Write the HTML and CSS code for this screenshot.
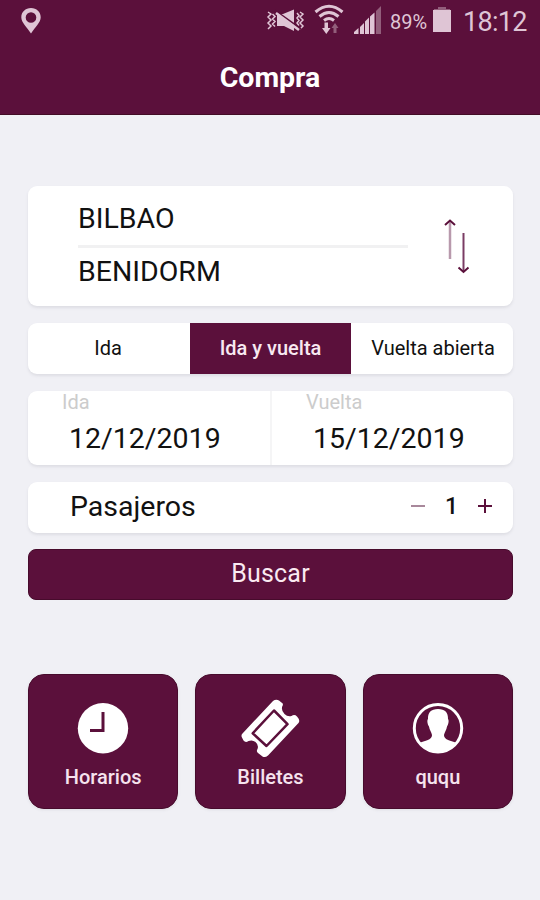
FILE: index.html
```html
<!DOCTYPE html>
<html lang="es">
<head>
<meta charset="utf-8">
<title>Compra</title>
<link rel="stylesheet" href="styles.css">
</head>
<body>
<header class="header">
  <div class="status">
    <svg class="pin" width="22" height="28" viewBox="0 0 22 28"><path fill-rule="evenodd" d="M11 1C5.400 1 1.300 5 1.300 10.200C1.300 15.600 7 20 11 26.500C15 20 20.700 15.600 20.700 10.200C20.700 5 16.600 1 11 1ZM11 5.200A5.300 5.300 0 1 1 11 15.800A5.300 5.300 0 1 1 11 5.200Z"/></svg>
    <svg class="signals" width="120" height="34" viewBox="0 0 120 34">
      <g class="line">
        <path d="M2 12L5 14L2 17L5 20L2 23L5 26L2 29M6.500 14L9 16.500L6.500 19L9 21.500L6.500 24L9 26.500M34 12L37 14L34 17L37 20L34 23L37 26L34 29M31 13L33 15.500L31 18L33 20.500L31 23L33 25.500"/>
      </g>
      <path d="M11 14H17L28 9.500V31L18 26H11Z"/>
      <path class="cut" d="M9 10.500L35 29"/>
      <path class="slash" d="M10 13L33 30"/>
      <g class="waves"><path d="M49.500 12Q63 .5 76.500 12M53.500 16.500Q63 8.500 72.500 16.500M58 20.500Q63 16.500 68 20.500"/></g>
      <path d="M58.500 22.500H62V28H64.500L60.300 34L56 28H58.500Z"/>
      <path class="dim" d="M67.500 33V28H65.500L69 23L72.500 28H70.500V33Z"/>
      <path d="M88 34V32L92.500 28V34ZM94 34V27L98 23V34ZM99 34V21.500L103 17.500V34ZM104 34V16.500L108.500 12.500V34Z"/>
      <path class="dim" d="M110 34V11L115 6V34Z"/>
    </svg>
    <span class="percent">89%</span>
    <svg class="battery" width="18" height="28" viewBox="0 0 18 28"><path class="dim" d="M5 2H13V4H17V6H1V4H5Z"/><path d="M0 5H18V27H0Z"/></svg>
    <span class="time">18:12</span>
  </div>
  <h1 class="title">Compra</h1>
</header>
<main class="main">
  <section class="card route">
    <div class="cities">
      <div class="city">BILBAO</div>
      <div class="city last">BENIDORM</div>
    </div>
    <svg class="swap" width="26" height="56" viewBox="0 0 26 56"><path class="up" d="M6 41V3"/><path class="down" d="M19.500 15V53"/><path class="heads" d="M1 7L6 2.500L11 7M14.500 49.500L19.500 54L24.500 49.500"/></svg>
  </section>
  <section class="card tabs">
    <div class="tab">Ida</div>
    <div class="tab active">Ida y vuelta</div>
    <div class="tab open">Vuelta abierta</div>
  </section>
  <section class="card dates">
    <div class="date"><span class="label">Ida</span><span class="value">12/12/2019</span></div>
    <div class="date"><span class="label">Vuelta</span><span class="value">15/12/2019</span></div>
  </section>
  <section class="card passengers">
    <span class="name">Pasajeros</span>
    <svg class="minus" width="14" height="14" viewBox="0 0 14 14"><path d="M0 7H14"/></svg>
    <span class="count">1</span>
    <svg class="plus" width="14" height="14" viewBox="0 0 14 14"><path d="M0 7H14M7 0V14"/></svg>
  </section>
  <div class="search">Buscar</div>
  <nav class="tiles">
    <div class="tile">
      <svg width="60" height="60" viewBox="0 0 60 60"><circle cx="30" cy="30.300" r="25.200"/><path class="hands" d="M30 14V32.500H17"/></svg>
      <span class="horarios">Horarios</span>
    </div>
    <div class="tile">
      <svg width="60" height="60" viewBox="0 0 60 60"><path d="M33 3Q36 .8 39 2.500L42.700 5.500Q43.300 7 42.200 8.500Q41 12.500 44.500 16Q47.500 19 51.500 18Q54.500 16 57 18.500L58.500 20.500Q60 23 58.500 25L28 57.500Q25 60 22.500 58.500L18 55Q16 53.500 17.500 51Q19 47 15.500 44Q12.500 41.500 8.500 43Q5.500 45 3.500 42.500L1.700 39Q1 37 2.500 35.500Z"/><path class="inner" d="M34 12.500L47.500 26.200L26.500 48L12.700 35.300Z"/></svg>
      <span class="billetes">Billetes</span>
    </div>
    <div class="tile">
      <svg width="60" height="60" viewBox="0 0 60 60"><circle class="ring" cx="30" cy="30.300" r="23.700"/><path d="M30 11C23 11 19.700 14.500 20 21C18.900 22 19.300 26 21 28.500C21.500 32 23.500 34 24 37C24 40.500 21 42 12.500 44.500C17 51.500 23 54.500 30 54.500C37 54.500 43 51.500 47.500 44.500C39 42 36 40.500 36 37C36.500 34 38.500 32 39 28.500C40.700 26 41.100 22 40 21C40.300 14.500 37 11 30 11Z"/></svg>
      <span class="ququ">ququ</span>
    </div>
  </nav>
</main>
</body>
</html>
```
FILE: styles.css
```css
* { box-sizing: border-box; }
body {
  margin: 0;
  height: 900px;
  overflow: hidden;
  background: #f0f0f5;
  color: #111;
  font-family: Roboto, "Liberation Sans", sans-serif;
}
svg { display: block; flex: none; }
.header {
  height: 115px;
  background: #5b103b;
  border-bottom: 1px solid #430c25;
  color: #fff;
}
.status {
  display: flex;
  height: 44px;
  padding-left: 20px;
  color: #dfc5d5;
  line-height: 44px;
}
.status svg { fill: #dfc5d5; }
.pin { margin-top: 7px; }
.signals { margin-left: 224px; }
.signals .line, .signals .waves, .slash, .cut { fill: none; stroke: #dfc5d5; stroke-width: 1.5; }
.signals .waves { stroke-width: 3; }
.signals .cut { stroke: #5b103b; stroke-width: 2; }
.signals .slash { stroke-width: 2.500; }
.status .dim { fill: #925e7b; }
.percent { width: 43px; margin-left: 4px; font-size: 20px; white-space: nowrap; }
.battery { margin-top: 5px; }
.time { margin-left: 12px; font-size: 27px; letter-spacing: -.7px; }
.title {
  margin: 16px 0 0;
  text-align: center;
  font-size: 28.500px;
  line-height: 36px;
  font-weight: 700;
  letter-spacing: 0;
}
.main { padding: 71px 27px 0 28px; }
.card {
  display: flex;
  margin-bottom: 17px;
  background: #fff;
  border-radius: 9px;
  box-shadow: 0 2px 3px #dedee4;
}
.route { height: 120px; padding-left: 50px; }
.cities { width: 330px; }
.city { height: 62px; padding: 16px 0 0; border-bottom: 3px solid #f1f1f2; font-size: 28.500px; line-height: 34px; }
.city.last { height: 50px; padding-top: 7px; border: 0; }
.swap { margin: 32px 0 0 36px; fill: none; stroke: #5b103b; stroke-width: 2; }
.swap .up { stroke: #b899ac; stroke-width: 2.500; }
.swap .down { stroke: #7a3c64; }
.tabs { height: 51px; }
.tab { width: 162px; padding-right: 2px; text-align: center; font-size: 20px; line-height: 50px; }
.tab.active { width: 161px; padding: 0; background: #5b103b; color: #f8e9f1; font-weight: 500; }
.tab.open { padding: 0 0 0 2px; }
.dates { height: 74px; }
.date { display: flex; flex-direction: column; width: 244px; padding-left: 34px; border-right: 2px solid #f5f5f6; }
.date + .date { width: 241px; border: 0; }
.label { height: 23px; color: #ccc; font-size: 20px; line-height: 23px; }
.value { padding-left: 7px; font-size: 28.500px; line-height: 49px; }
.passengers { height: 51px; align-items: center; padding: 0 21px 3px 42px; margin-bottom: 16px; }
.name { flex: 1; font-size: 28.500px; }
.minus { stroke: #a8889b; stroke-width: 2; }
.plus { stroke: #5b103b; stroke-width: 2; }
.count { width: 53px; text-align: center; font-size: 23px; font-weight: 500; }
.search {
  height: 51px;
  border-radius: 8px;
  border: 1px solid #470b2c;
  background: #5b103b;
  color: #faeaf1;
  text-align: center;
  font-size: 25px;
  line-height: 48px;
  letter-spacing: .2px;
}
.tiles { display: grid; grid-template-columns: repeat(3, 1fr); gap: 17px; margin-top: 74px; }
.tile {
  display: flex;
  flex-direction: column;
  align-items: center;
  height: 135px;
  padding-top: 23px;
  border: 1px solid #470b2c;
  border-radius: 16px;
  background: #5b103b;
  box-shadow: 0 1px 3px #dedee4;
  color: #f6e3ee;
  font-size: 20px;
  font-weight: 500;
}
.tile svg { fill: #fff; }
.tile span { margin-top: 7px; line-height: 24px; }
.hands, .inner { fill: none; stroke: #5b103b; stroke-width: 3; }
.inner { stroke-width: 2.500; stroke-linejoin: round; }
.tile .ring { fill: none; stroke: #fff; stroke-width: 3; }
```
